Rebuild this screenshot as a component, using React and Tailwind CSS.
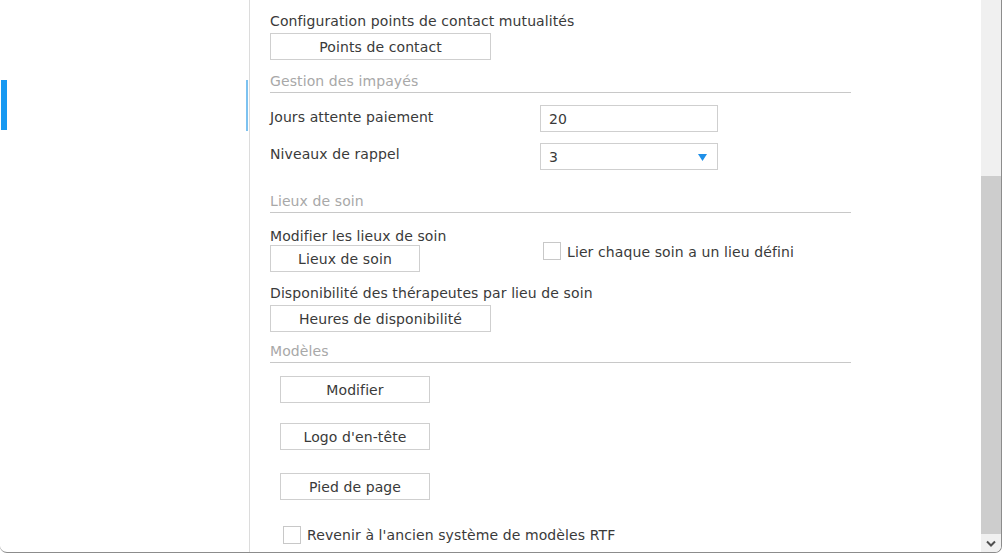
import React from 'react';

const font = { fontFamily: '"DejaVu Sans", Verdana, sans-serif' };

const Button = ({ children, className = '' }) => (
  <div className={`h-[27px] border border-[#cfcfcf] bg-white flex items-center justify-center pt-[2px] text-[14px] leading-[17px] text-[#3a3a3a] ${className}`}>
    {children}
  </div>
);

const SectionHeader = ({ children, className = '' }) => (
  <div className={`w-[581px] border-b border-[#c8c8c8] pb-[2px] text-[14px] leading-[17px] text-[#a8a8a8] ${className}`}>
    {children}
  </div>
);

const Checkbox = ({ className = '' }) => (
  <div className={`w-[18px] h-[18px] border border-[#c8c8c8] bg-white shrink-0 ${className}`} />
);

const App = () => {
  return (
    <div style={font} className="w-[1002px] h-[555px] bg-white tracking-[0.1px]">
      <div className="w-[1002px] h-[553px] flex border-b border-r border-[#8c8c8c] rounded-b-[7px] overflow-hidden bg-white">
        {/* sidebar */}
        <div className="w-[250px] shrink-0 border-r border-[#dcdcdc] flex justify-between items-start pt-[80px]">
          <div className="ml-[1px] w-[6px] h-[50px] bg-[#1799f2]" />
          <div className="mr-[1px] w-[2px] h-[51px] bg-[#7dc2f0]" />
        </div>

        {/* content */}
        <div className="flex-1 pl-[20px] flex flex-col text-[14px] leading-[17px] text-[#3a3a3a]">
          <div className="mt-[13px]">Configuration points de contact mutualités</div>
          <Button className="mt-[3px] w-[221px]">Points de contact</Button>

          <SectionHeader className="mt-[13px]">Gestion des impayés</SectionHeader>

          <div className="mt-[12px] flex items-start">
            <div className="w-[270px] pt-[4px]">Jours attente paiement</div>
            <div className="w-[178px] h-[27px] border border-[#cfcfcf] flex items-center pl-[8px] pt-[2px]">20</div>
          </div>

          <div className="mt-[11px] flex items-start">
            <div className="w-[270px] pt-[3px]">Niveaux de rappel</div>
            <div className="w-[178px] h-[27px] border border-[#cfcfcf] flex items-center justify-between pl-[8px] pr-[10px] pt-[2px]">
              <span>3</span>
              <svg width="9" height="7" viewBox="0 0 9 7">
                <path d="M0 0 L9 0 L4.5 7 Z" fill="#1e8fe8" />
              </svg>
            </div>
          </div>

          <SectionHeader className="mt-[23px]">Lieux de soin</SectionHeader>

          <div className="mt-[15px] flex items-start">
            <div className="w-[270px] flex flex-col">
              <div>Modifier les lieux de soin</div>
              <Button className="w-[150px]">Lieux de soin</Button>
            </div>
            <div className="mt-[13px] ml-[3px] flex items-center gap-[6px]">
              <Checkbox />
              <span className="pt-[3px]">Lier chaque soin a un lieu défini</span>
            </div>
          </div>

          <div className="mt-[13px]">Disponibilité des thérapeutes par lieu de soin</div>
          <Button className="mt-[3px] w-[221px]">Heures de disponibilité</Button>

          <SectionHeader className="mt-[11px] pb-[1px]">Modèles</SectionHeader>

          <div className="pl-[10px] flex flex-col">
            <Button className="mt-[13px] w-[150px]">Modifier</Button>
            <Button className="mt-[20px] w-[150px]">Logo d'en-tête</Button>
            <Button className="mt-[23px] w-[150px]">Pied de page</Button>
          </div>

          <div className="mt-[25px] ml-[13px] flex items-center gap-[6px]">
            <Checkbox />
            <span className="pt-[2px]">Revenir à l'ancien système de modèles RTF</span>
          </div>
        </div>

        {/* scrollbar */}
        <div className="w-[20px] shrink-0 bg-[#f0f0f0] flex flex-col">
          <div className="h-[176px]" />
          <div className="flex-1 bg-[#cdcdcd]" />
          <div className="h-[18px] flex items-center justify-center">
            <svg width="10" height="7" viewBox="0 0 10 7">
              <path d="M1 1.5 L5 5.5 L9 1.5" fill="none" stroke="#505050" strokeWidth="2" />
            </svg>
          </div>
        </div>
      </div>
    </div>
  );
};

export default App;
